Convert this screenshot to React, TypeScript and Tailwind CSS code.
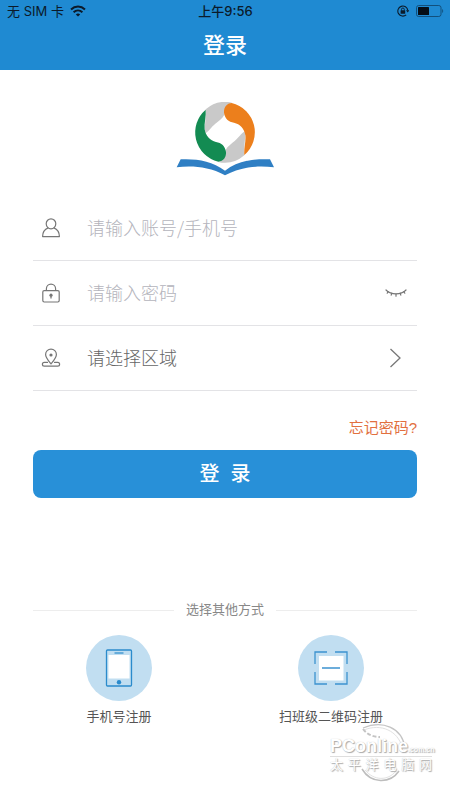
import type { ReactNode } from "react";

function WifiIcon() {
  return (
    <svg width="16" height="12" viewBox="0 0 16 12" fill="none" stroke="#0b1a2a" strokeWidth="2" aria-hidden="true">
      <path d="M1 4.4C5 .6 11 .6 15 4.4" />
      <path d="M3.6 7.2c2.6-2.4 6.2-2.4 8.8 0" />
      <path d="M8 11.6 5.8 9.4c1.2-1.1 3.2-1.1 4.4 0z" fill="#0b1a2a" stroke="none" />
    </svg>
  );
}

function RotationLockIcon() {
  return (
    <svg width="12" height="12" viewBox="0 0 12 12" fill="none" stroke="#0b1a2a" aria-hidden="true">
      <path d="M9.2 9.8A5 5 0 1 1 10.8 5.4" strokeWidth="1.1" />
      <path d="M9 5.2h3.4L10.7 7.6z" fill="#0b1a2a" stroke="none" />
      <rect x="3.6" y="5.3" width="4.6" height="3.5" rx=".4" fill="#0b1a2a" stroke="none" />
      <path d="M4.5 5.5V4.4a1.4 1.4 0 0 1 2.8 0v1.1" strokeWidth=".9" />
    </svg>
  );
}

function BatteryIcon() {
  return (
    <svg width="28" height="12" viewBox="0 0 28 12" fill="none" aria-hidden="true">
      <rect x=".5" y=".5" width="24.5" height="11" rx="2.2" stroke="#12507c" />
      <rect x="2" y="2" width="11" height="8" rx=".6" fill="#050d16" />
      <path d="M26.2 4c1.3.5 1.3 3.5 0 4z" fill="#12507c" />
    </svg>
  );
}

const BLADE =
  "M107 35A90 90 0 0 0 145 191C160 190 169 178 168 162C166 145 154 134 138 132C120 128 107 114 104 94C102 74 109 54 107 35z";
const FILLER =
  "M107 34A90 90 0 0 1 186 14C168 21 160 35 163 50C157 62 146 68 136 77C122 89 117 99 106 106C102 85 109 60 107 34z";

function Logo() {
  return (
    <svg width="98" height="74" viewBox="18 12 294 222" role="img" aria-label="logo">
      <path d={FILLER} fill="#c9c9c9" />
      <path d={FILLER} fill="#c9c9c9" transform="rotate(180 165 103)" />
      <path d={BLADE} fill="#138b52" />
      <path d={BLADE} fill="#ec7f1c" transform="rotate(180 165 103)" />
      <path
        d="M32 184C80 182 125 188 165 218C205 188 250 182 300 184L312 208C265 203 215 205 165 232C115 205 65 203 20 208z"
        fill="#2f7fc4"
      />
    </svg>
  );
}

function UserIcon() {
  return (
    <svg width="20" height="20" viewBox="0 0 20 20" fill="none" stroke="#777" strokeWidth="1.2" strokeLinejoin="round" aria-hidden="true">
      <ellipse cx="10" cy="5.8" rx="4.8" ry="5" />
      <path d="M7.200 9.900C4 11.2 1.600 14 1.600 18.600h16.800c0-4.600-2.400-7.400-5.600-8.700" />
    </svg>
  );
}

function LockIcon() {
  return (
    <svg width="20" height="20" viewBox="0 0 20 20" fill="none" stroke="#777" strokeWidth="1.2" aria-hidden="true">
      <rect x="1.800" y="7.600" width="16.400" height="11.400" rx="1.400" />
      <path d="M5.400 7.500V5.700a4.600 4.600 0 0 1 9.200 0v1.800" />
      <circle cx="10" cy="12.200" r="1.600" fill="#777" stroke="none" />
      <path d="M10 12.500v3" strokeWidth="1.300" />
    </svg>
  );
}

function PinIcon() {
  return (
    <svg width="20" height="20" viewBox="0 0 20 20" fill="none" stroke="#777" strokeWidth="1.2" strokeLinecap="round" aria-hidden="true">
      <path d="M10 15.800C7.500 12.800 4.600 9.800 4.600 6.500a5.400 5.400 0 0 1 10.800 0c0 3.300-2.900 6.300-5.400 9.300z" />
      <circle cx="10" cy="7" r="1.600" fill="#777" stroke="none" />
      <path d="M6.500 14.400H3.300a1.900 1.900 0 0 0 0 3.800h13.400a1.900 1.900 0 0 0 0-3.800h-3.200" />
    </svg>
  );
}

function ClosedEyeIcon() {
  return (
    <svg width="22" height="8" viewBox="0 0 22 8" fill="none" stroke="#777" strokeWidth="1.2" strokeLinecap="round" aria-hidden="true">
      <path d="M1 1c5 5.200 15 5.200 20 0" />
      <path d="M3.200 2.600 2.200 4.200M6.800 4.200 6.200 6.200M11 5v2.200M15.200 4.200l.6 2M18.800 2.600l1 1.600" />
    </svg>
  );
}

function PhoneIcon() {
  return (
    <svg width="66" height="66" viewBox="0 0 66 66" fill="none" aria-hidden="true">
      <circle cx="33" cy="33" r="33" fill="#c1def1" />
      <rect x="20.500" y="15" width="25" height="36" rx="1" stroke="#2b8bcc" strokeWidth="1.300" />
      <rect x="22.500" y="20" width="21" height="23.500" fill="#fff" />
      <path d="M28.500 18h9" stroke="#2b8bcc" strokeWidth="1.200" />
      <circle cx="33" cy="47.200" r="2.200" fill="#2b8bcc" />
    </svg>
  );
}

function ScanIcon() {
  return (
    <svg width="66" height="66" viewBox="0 0 66 66" fill="none" aria-hidden="true">
      <circle cx="33" cy="33" r="33" fill="#c1def1" />
      <rect x="21" y="21" width="24.500" height="24.500" fill="#fff" />
      <path d="M17 29V17h12M37 17h12v12M49 37v12H37M29 49H17V37M24 33h18" stroke="#3d93cf" strokeWidth="1.300" />
    </svg>
  );
}

function Row({ icon, children }: { icon: ReactNode; children: ReactNode }) {
  return (
    <div className="flex h-[65px] items-center border-b border-[#e3e3e6] px-2">
      {icon}
      {children}
    </div>
  );
}

function Method({ icon, label }: { icon: ReactNode; label: string }) {
  return (
    <button type="button" className="flex flex-col items-center gap-1 justify-self-center text-[13px] leading-6 text-[#555]">
      {icon}
      <span>{label}</span>
    </button>
  );
}

function Watermark() {
  return (
    <div className="pointer-events-none absolute right-[18px] bottom-[26px] w-[102px] text-white [text-shadow:1px_1px_1px_#aaa,0_0_1px_#bbb]">
      <svg className="absolute -top-4 left-[22px]" width="62" height="62" viewBox="0 0 62 62" fill="none" aria-hidden="true">
        <path d="M11 5C30-3 50 4 53 25" stroke="#c4c4c4" strokeWidth="1.300" />
        <path d="M12 7C29 0 46 8 50 24" stroke="#e2e2e2" />
        <path d="M10 46c9 15 28 15 37 2" stroke="#bdbdbd" strokeWidth="1.500" />
        <path d="M13 47c9 11 23 11 31 1" stroke="#e2e2e2" />
        <path d="M11 6c4 5 9 8 17 8" stroke="#c4c4c4" strokeWidth="2" strokeDasharray="4 2" />
      </svg>
      <div className="relative flex h-[18px] items-end border-b border-[#dedede] leading-5 font-bold">
        <span className="text-[18px]">PConline</span>
        <span className="text-[7px] leading-3">.com.cn</span>
      </div>
      <div className="relative text-[13px] leading-4 [text-align-last:justify]">太平洋电脑网</div>
    </div>
  );
}

export default function App() {
  return (
    <div className="relative min-h-screen bg-white font-['Liberation_Sans','Noto_Sans_CJK_SC',sans-serif]">
      <header className="bg-[#1f8ad2]">
        <div className="grid h-[22px] grid-cols-3 items-center pr-[6px] pl-[7px] text-[13px] leading-5 text-[#0b1a2a]">
          <div className="flex items-center gap-[6px] font-['Inter','Noto_Sans_CJK_SC',sans-serif]">
            <span>无 SIM 卡</span>
            <WifiIcon />
          </div>
          <div className="text-center font-['Inter','Noto_Sans_CJK_SC',sans-serif] font-medium">上午9:56</div>
          <div className="flex items-center justify-end gap-[7px]">
            <RotationLockIcon />
            <BatteryIcon />
          </div>
        </div>
        <h1 className="h-12 text-center text-[22px] leading-[48px] font-medium text-white">登录</h1>
      </header>

      <main className="pt-8">
        <div className="flex justify-center">
          <Logo />
        </div>
        <form className="mt-5 px-[33px]" onSubmit={(e) => e.preventDefault()}>
          <Row icon={<UserIcon />}>
            <input
              type="text"
              aria-label="账号"
              placeholder="请输入账号/手机号"
              className="ml-[26px] h-8 min-w-0 flex-1 pb-[2px] font-['Noto_Sans_CJK_SC',sans-serif] text-[18px] font-light text-[#666] outline-none placeholder:text-[#b4b4bc]"
            />
          </Row>
          <Row icon={<LockIcon />}>
            <input
              type="password"
              aria-label="密码"
              placeholder="请输入密码"
              className="ml-[26px] h-8 min-w-0 flex-1 pb-[2px] font-['Noto_Sans_CJK_SC',sans-serif] text-[18px] font-light text-[#666] outline-none placeholder:text-[#b4b4bc]"
            />
            <button type="button" aria-label="显示密码" className="px-[2px] py-2">
              <ClosedEyeIcon />
            </button>
          </Row>
          <Row icon={<PinIcon />}>
            <select
              aria-label="区域"
              className="ml-[26px] h-8 min-w-0 flex-1 appearance-none bg-transparent pb-[2px] font-['Noto_Sans_CJK_SC',sans-serif] text-[18px] font-light text-[#666] outline-none"
            >
              <option>请选择区域</option>
            </select>
            <svg className="mr-2" width="11" height="20" viewBox="0 0 11 20" fill="none" stroke="#777" strokeWidth="1.300" aria-hidden="true">
              <path d="M.5 1 10 10 .5 19" />
            </svg>
          </Row>
          <div className="flex justify-end pt-[25px]">
            <a href="#forgot" className="text-[15px] leading-6 text-[#e2703f]">
              忘记密码?
            </a>
          </div>
          <button
            type="submit"
            className="mt-[10px] h-12 w-full rounded-lg bg-[#2890d8] text-[20px] font-medium whitespace-pre text-white"
          >
            {"登  录"}
          </button>
        </form>

        <section className="mt-[102px]">
          <div className="flex items-center gap-3 px-[33px]">
            <span className="h-px flex-1 bg-[#ededed]" />
            <h2 className="text-[13px] leading-5 text-[#888]">选择其他方式</h2>
            <span className="h-px flex-1 bg-[#ededed]" />
          </div>
          <div className="mt-[15px] grid grid-cols-2 px-[13px]">
            <Method icon={<PhoneIcon />} label="手机号注册" />
            <Method icon={<ScanIcon />} label="扫班级二维码注册" />
          </div>
        </section>
      </main>
      <Watermark />
    </div>
  );
}
